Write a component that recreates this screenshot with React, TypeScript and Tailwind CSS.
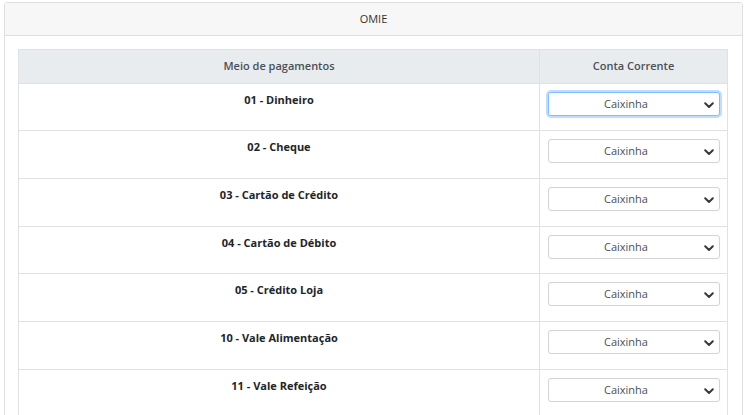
import React from "react";

const rows: { label: string; h: string }[] = [
  { label: "01 - Dinheiro", h: "h-[47px]" },
  { label: "02 - Cheque", h: "h-[48px]" },
  { label: "03 - Cartão de Crédito", h: "h-[48px]" },
  { label: "04 - Cartão de Débito", h: "h-[47px]" },
  { label: "05 - Crédito Loja", h: "h-[48px]" },
  { label: "10 - Vale Alimentação", h: "h-[48px]" },
  { label: "11 - Vale Refeição", h: "h-[48px]" },
];

function Chevron() {
  return (
    <svg width="10" height="7" viewBox="0 0 10 7" className="absolute right-[5px] top-[9px]">
      <path d="M1.2 1.2 L5 5 L8.8 1.2" fill="none" stroke="#343a40" strokeWidth="2" strokeLinecap="round" strokeLinejoin="round" />
    </svg>
  );
}

export default function App() {
  return (
    <div
      className="pt-[2px] pl-[4px] pr-[5px] bg-white h-[415px] overflow-hidden"
      style={{ fontFamily: '"Segoe UI", "Open Sans", "Noto Sans", sans-serif' }}
    >
      <div className="border border-[#dfdfdf] rounded-[3px]">
        <div className="h-[33px] bg-[#f7f7f7] border-b border-[#dfdfdf] flex items-center justify-center text-[11px] text-[#333]">
          OMIE
        </div>
        <div className="pt-[13px] pl-[13px] pr-[14px]">
          <table className="w-full border-collapse text-[11px]">
            <thead>
              <tr className="h-[34px] bg-[#e9ecef]">
                <th className="border border-[#dee2e6] font-semibold text-[#495057] text-center w-[521px]">
                  Meio de pagamentos
                </th>
                <th className="border border-[#dee2e6] font-semibold text-[#495057] text-center">
                  Conta Corrente
                </th>
              </tr>
            </thead>
            <tbody>
              {rows.map((r, i) => (
                <tr key={r.label} className={r.h}>
                  <td className="border border-[#dee2e6] align-top text-center font-bold text-[#212529] pt-[8px] leading-[16px]">
                    {r.label}
                  </td>
                  <td className="border border-[#dee2e6] align-top pt-[8px] pl-[8px] pr-[7px]">
                    <div
                      className={
                        i === 0
                          ? "relative h-[24px] rounded-[3px] border border-[#80bdff] shadow-[0_0_0_2px_rgba(0,123,255,0.25)] bg-white flex items-center justify-center pr-[16px] text-[#495057]"
                          : "relative h-[24px] rounded-[3px] border border-[#ced4da] bg-white flex items-center justify-center pr-[16px] text-[#495057]"
                      }
                    >
                      Caixinha
                      <Chevron />
                    </div>
                  </td>
                </tr>
              ))}
            </tbody>
          </table>
        </div>
      </div>
    </div>
  );
}
